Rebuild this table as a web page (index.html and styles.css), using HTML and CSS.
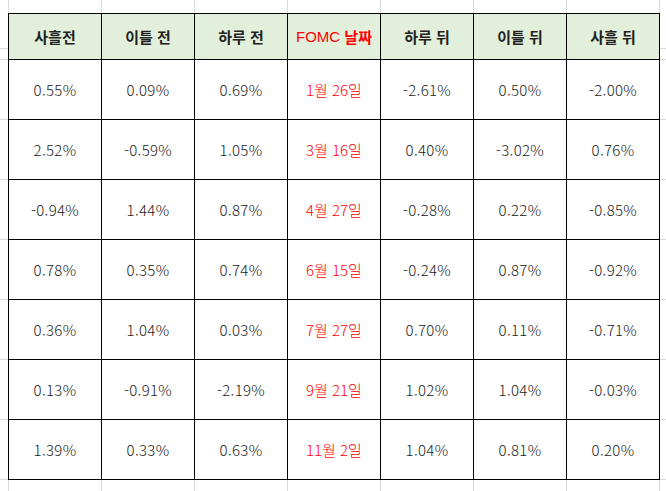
FILE: index.html
```html
<!DOCTYPE html>
<html lang="ko">
<head>
<meta charset="utf-8">
<link rel="stylesheet" href="styles.css">
</head>
<body>
<div class="sheet">
  <div class="table">
    <div class="cell head">사흘전</div>
    <div class="cell head">이틀 전</div>
    <div class="cell head">하루 전</div>
    <div class="cell head red"><span class="latin">FOMC</span>&nbsp;날짜</div>
    <div class="cell head">하루 뒤</div>
    <div class="cell head">이틀 뒤</div>
    <div class="cell head">사흘 뒤</div>

    <div class="cell">0.55%</div><div class="cell">0.09%</div><div class="cell">0.69%</div><div class="cell date">1월 26일</div><div class="cell">-2.61%</div><div class="cell">0.50%</div><div class="cell">-2.00%</div>
    <div class="cell">2.52%</div><div class="cell">-0.59%</div><div class="cell">1.05%</div><div class="cell date">3월 16일</div><div class="cell">0.40%</div><div class="cell">-3.02%</div><div class="cell">0.76%</div>
    <div class="cell">-0.94%</div><div class="cell">1.44%</div><div class="cell">0.87%</div><div class="cell date">4월 27일</div><div class="cell">-0.28%</div><div class="cell">0.22%</div><div class="cell">-0.85%</div>
    <div class="cell">0.78%</div><div class="cell">0.35%</div><div class="cell">0.74%</div><div class="cell date">6월 15일</div><div class="cell">-0.24%</div><div class="cell">0.87%</div><div class="cell">-0.92%</div>
    <div class="cell">0.36%</div><div class="cell">1.04%</div><div class="cell">0.03%</div><div class="cell date">7월 27일</div><div class="cell">0.70%</div><div class="cell">0.11%</div><div class="cell">-0.71%</div>
    <div class="cell">0.13%</div><div class="cell">-0.91%</div><div class="cell">-2.19%</div><div class="cell date">9월 21일</div><div class="cell">1.02%</div><div class="cell">1.04%</div><div class="cell">-0.03%</div>
    <div class="cell">1.39%</div><div class="cell">0.33%</div><div class="cell">0.63%</div><div class="cell date">11월 2일</div><div class="cell">1.04%</div><div class="cell">0.81%</div><div class="cell">0.20%</div>
  </div>
</div>
</body>
</html>
```

FILE: styles.css
```css
html, body {
  margin: 0;
  padding: 0;
  background: #fff;
}
.sheet {
  width: 666px;
  height: 491px;
  box-sizing: border-box;
  padding: 13px 0 0 8px;
  overflow: hidden;
  background-color: #fff;
  background-image:
    repeating-linear-gradient(to right, #dadada 0 1px, transparent 1px 93px),
    repeating-linear-gradient(to bottom, #dadada 0 1px, transparent 1px 60px);
  background-position: 8px 0, 0 59px;
}
.table {
  display: grid;
  grid-template-columns: repeat(7, 92px);
  grid-template-rows: 45px repeat(7, 59px);
  gap: 1px;
  padding: 1px;
  background: #000;
  width: max-content;
}
.cell {
  background: #fff;
  display: flex;
  align-items: center;
  justify-content: center;
  font-family: "Noto Sans CJK KR", "Noto Sans", sans-serif;
  font-size: 15px;
  letter-spacing: 0.3px;
  color: #222;
  font-weight: 300;
}
.head {
  background: #e2efda;
  font-weight: 700;
  letter-spacing: 0;
  color: #222;
}
.latin {
  font-family: "Liberation Sans", Arial, sans-serif;
  font-weight: 400;
  font-size: 15px;
}
.date {
  color: #ff0000;
  letter-spacing: 0;
}
.red {
  color: #ff0000;
}
```
